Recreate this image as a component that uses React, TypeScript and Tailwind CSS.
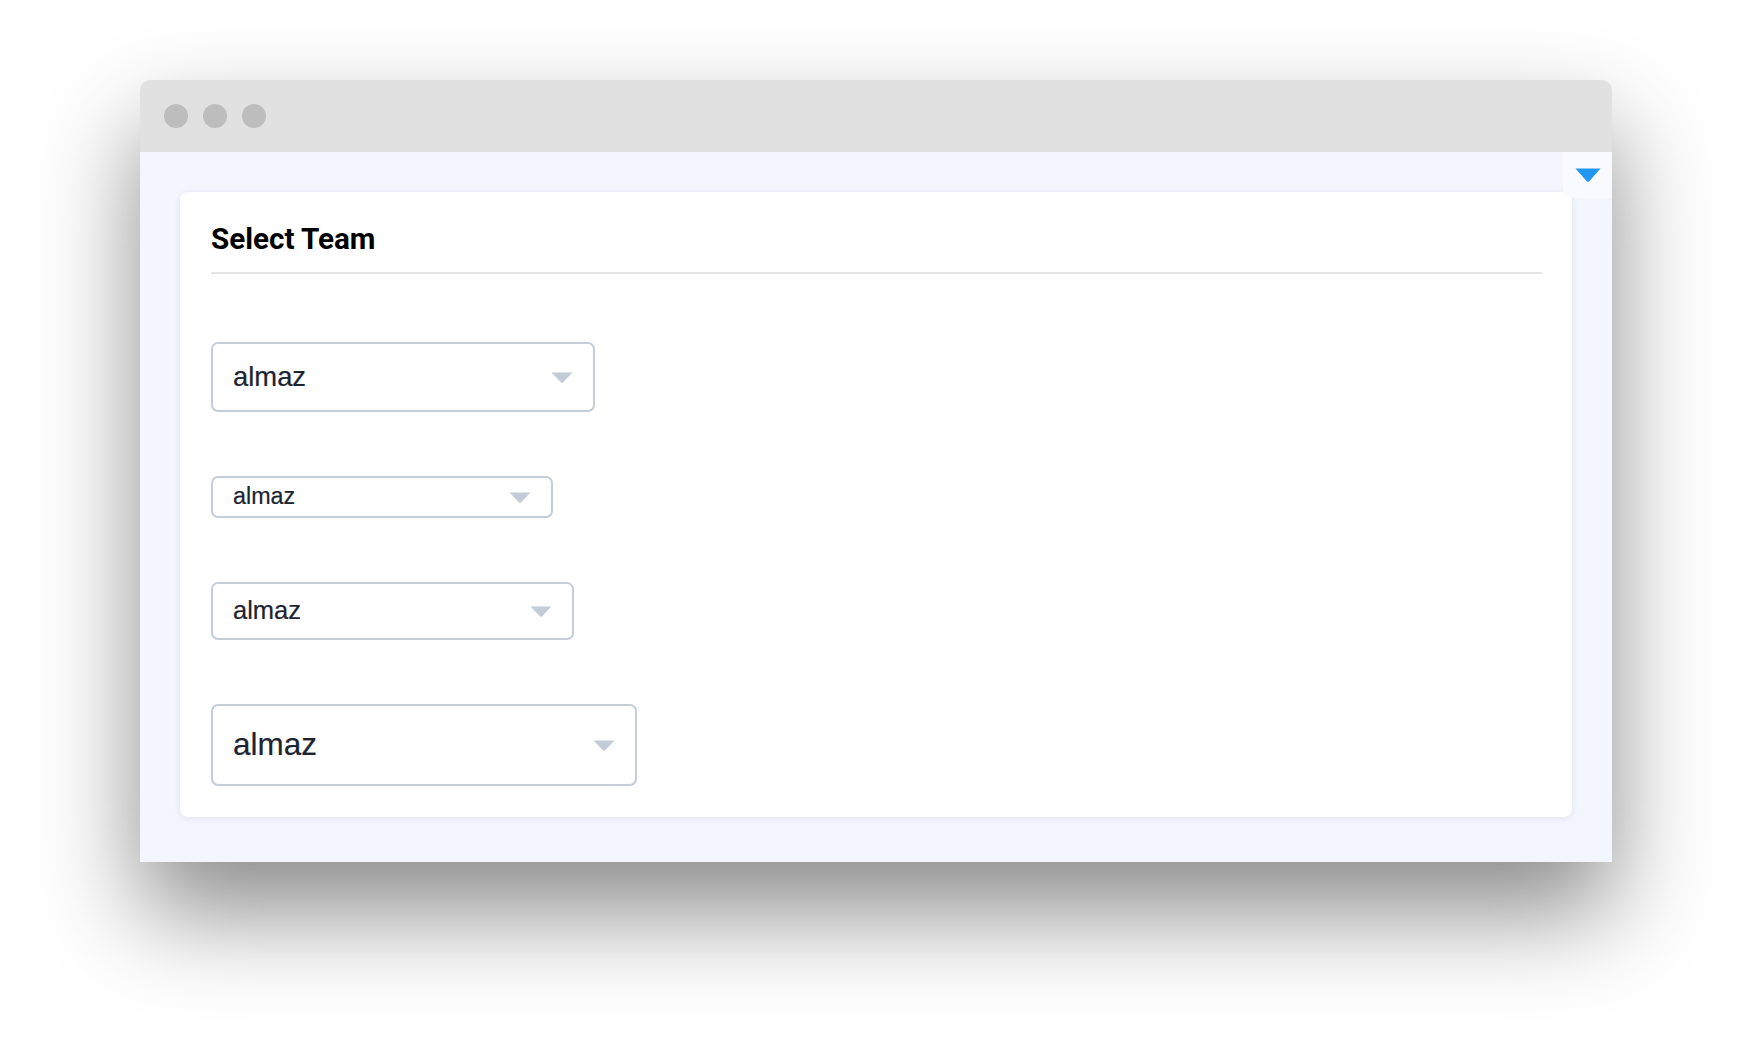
import { useState } from 'react'

type Size = {
  width: string
  height: string
  text: string
}

const sizes: Size[] = [
  { width: 'w-[384px]', height: 'h-[70px]', text: 'text-[27.4px]' },
  { width: 'w-[342px]', height: 'h-[42px]', text: 'text-[23.3px]' },
  { width: 'w-[363px]', height: 'h-[58px]', text: 'text-[25.5px]' },
  { width: 'w-[426px]', height: 'h-[82px]', text: 'text-[31.5px]' },
]

const Caret = ({ className }: { className: string }) => (
  <svg viewBox="0 0 22 11" className={className} fill="currentColor">
    <path d="M0.5 0.5h21L12.2 10.2a1.7 1.7 0 0 1-2.4 0z" />
  </svg>
)

const TeamSelect = ({ size }: { size: Size }) => {
  const [team] = useState('almaz')
  return (
    <div
      className={`flex items-center justify-between rounded-[7px] border-2 border-[#c4cdd8] bg-white pl-[20px] pr-[20px] ${size.width} ${size.height}`}
    >
      <span className={`${size.text} leading-none text-[#1c2431] [-webkit-text-stroke:0.2px_#1c2431]`}>{team}</span>
      <Caret className="h-[11px] w-[22px] text-[#c2ccd8]" />
    </div>
  )
}

const App = () => {
  return (
    <div className="min-h-[1062px] bg-white pt-[80px] font-['Liberation_Sans',Arial,sans-serif]">
      <div className="mx-auto w-[1472px] rounded-t-[10px] shadow-[0_50px_100px_rgba(0,0,0,0.46)]">
        <div className="flex h-[72px] items-center gap-[15px] rounded-t-[10px] bg-[#e1e1e1] pl-[24px]">
          <span className="h-[24px] w-[24px] rounded-full bg-[#bdbdbd]" />
          <span className="h-[24px] w-[24px] rounded-full bg-[#bdbdbd]" />
          <span className="h-[24px] w-[24px] rounded-full bg-[#bdbdbd]" />
        </div>

        <div className="relative bg-[#f3f6fd] px-[40px] pb-[45px] pt-[40px]">
          <div className="absolute right-0 top-0 flex h-[46px] w-[49px] items-center justify-center rounded-bl-[8px] bg-[#f8faff]">
            <svg viewBox="0 0 26 14" className="h-[14px] w-[26px] text-[#2196f3]" fill="currentColor">
              <path d="M0.5 0.5h25L14.5 13a2 2 0 0 1-3 0z" />
            </svg>
          </div>

          <div className="rounded-[8px] bg-white px-[31px] pb-[31px] pt-[30px] shadow-[0_1px_6px_rgba(160,175,205,0.25)]">
            <div className="font-['Roboto',sans-serif] text-[29.6px] font-bold leading-[34px] text-black">
              Select Team
            </div>
            <div className="mr-[-1px] mt-[16px] h-[2px] bg-[#e4e5e7]" />

            <div className="mt-[68px] flex flex-col gap-[64px]">
              {sizes.map((size, index) => (
                <TeamSelect key={index} size={size} />
              ))}
            </div>
          </div>
        </div>
      </div>
    </div>
  )
}

export default App
